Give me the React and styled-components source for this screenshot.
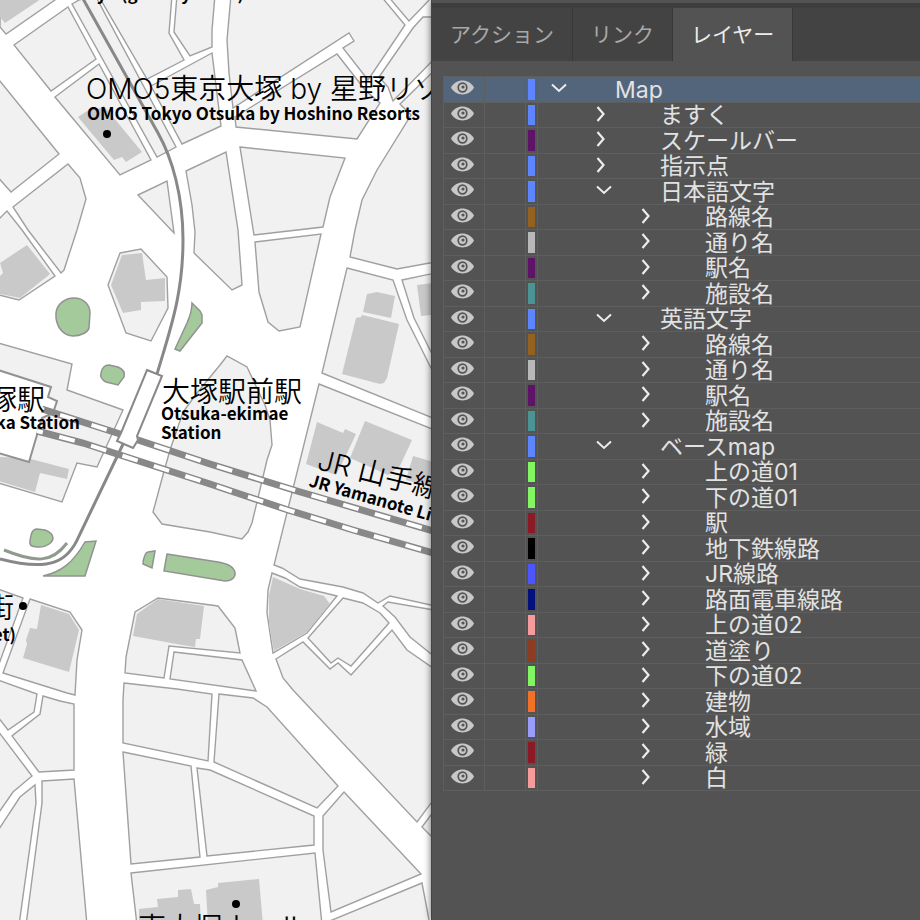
import React, { useState } from 'react';
import styled, { createGlobalStyle } from 'styled-components';

const App = () => {
    return (
        <AppStyled>
            <GlobalStyle />
            <MapPane>
                <StreetMap />
            </MapPane>
            <LayersPanel />
        </AppStyled>
    );
}

export default App;

const GlobalStyle = createGlobalStyle`
    * { box-sizing: border-box; }

    body {
        margin: 0;
        background-color: #535353;
        font-family: Inter, "Noto Sans CJK JP", sans-serif;
    }
`;

const AppStyled = styled.div`
    display: flex;
    height: 100vh;
    min-height: 800px;
    overflow: hidden;
`;

const MapPane = styled.main`
    flex: 1;
    min-width: 0;
    background-color: white;

    svg {
        display: block;
        width: 100%;
        height: 100%;
    }
`;

/* ---------- map ---------- */

const blocks = [
    '0,-5 0,27 6,34 55,0 60,-5',
    '14,45 68,7 96,59 51,91',
    '55,97 99,64 151,160 120,175',
    '72,4 79,0 95,-5 176,147 157,157',
    '98,-5 147,79 184,60 169,33 172,-5',
    '177,-5 174,32 190,56 212,47 212,30 215,-5',
    '151,86 212,53 221,126 182,144',
    '231,-5 227,40 229,73 233,108 349,33 354,41 343,48 368,80 405,25 380,-5',
    '236,127 235,117 337,54 366,91 380,103 357,139',
    '387,-5 409,21 434,-5',
    '440,17 423,17 413,28 379,77 388,87 393,101 440,53',
    '440,65 400,104 411,115 377,170 362,200 355,230 350,257 397,269 440,261',
    '-5,75 59,154 11,192 -5,174',
    '13,207 68,164 80,178 86,199 77,230 64,270 61,273 28,230',
    '-5,223 7,211 22,230 55,276 19,300 -5,294',
    '138,195 167,181 174,233',
    '120,253 141,249 167,277 168,308 151,341 126,333 108,285',
    '186,171 226,152 238,230 242,285 232,290 194,253 195,232 192,205',
    '240,147 345,158 330,197 323,227 254,235',
    '255,242 321,234 300,327 279,331 268,322 259,292',
    '347,268 393,280 407,320 440,386 440,421 322,373',
    '402,280 440,272 440,370 414,318',
    '319,384 440,432 440,607 390,596 378,603 363,593 343,587 300,579 282,568 274,565',
    '-5,342 72,364 67,390 123,410 97,467 77,463 62,502 -5,482',
    '162,524 153,512 163,475 170,450 183,412 197,393 220,365 227,356 247,367 265,405 270,420 272,445 267,460 252,523 248,532 242,539 210,532',
    '272,573 285,578 300,587 337,596 307,633 273,653 267,613 268,590',
    '343,598 363,603 380,613 389,623 351,666 338,658 331,663 308,638',
    '276,659 303,642 330,669 338,663 351,675 392,630 407,650 440,673 440,791 417,822 293,690 283,678',
    '383,606 388,602 440,611 440,661 410,637 395,617',
    '422,827 440,803 440,845',
    '344,792 421,874 331,912 323,850 323,816',
    '422,883 320,925 430,925',
    '219,694 253,698 267,707 338,786 317,808 214,762',
    '124,683 177,689 212,694 208,761 123,743 123,700',
    '125,673 126,657 135,612 158,598 218,606 235,628 240,653 169,646 164,678',
    '174,652 242,660 256,691 170,679',
    '123,752 191,766 200,857 131,864',
    '197,768 210,770 314,816 314,845 207,856',
    '131,873 315,853 322,925 137,925',
    '30,599 70,612 82,630 77,660 75,695 67,693 3,673',
    '-5,588 23,598 -5,675',
    '43,696 60,701 74,704 74,770 39,772 12,736 40,714',
    '-5,679 37,694 34,712 8,730 -5,713',
    '-5,727 32,776 13,792 -5,818',
    '-5,835 20,797 35,785 36,803 19,925 -5,925',
    '42,781 74,779 87,925 26,925 42,803',
];

const buildings = [
    '-5,-5 45,-5 38,1 5,23 -5,11',
    '78,117 93,107 98,109 104,106 142,152 126,162 122,157 114,160',
    '0,263 27,245 50,274 20,298 0,294 0,276 3,273',
    '122,255 142,253 146,280 165,278 165,301 141,302 141,310 123,313 111,285',
    '367,294 377,292 395,296 391,318 363,312',
    '356,318 361,317 362,315 371,317 399,324 387,378 384,383 380,384 342,374',
    '417,285 440,282 440,314 421,316',
    '317,422 343,433 345,429 356,434 350,447 336,475 306,464',
    '365,421 412,440 400,466 388,475 350,458',
    '413,456 440,464 440,490 406,480',
    '-5,462 0,457 27,458 69,469 67,479 40,473 35,492 -5,480',
    '41,605 69,614 79,630 69,672 23,658 27,644 26,640 30,628 37,629',
    '137,614 158,599 204,606 200,639 196,639 195,647 182,645 133,636',
    '273,577 300,589 324,596 330,604 307,632 274,651 269,625 269,595',
    '139,909 158,907 157,899 178,897 178,890 191,889 194,904 200,904 201,925 139,925',
    '206,890 218,887 218,883 259,879 263,925 208,925',
];

const StreetMap = () => (
    <svg viewBox="0 0 432 920" preserveAspectRatio="xMinYMin slice" role="img" aria-label="大塚駅">
        <g fill="#f1f1f1" stroke="#a0a0a0" strokeWidth="1.4">
            {blocks.map((points) => <polygon key={points} points={points} />)}
        </g>
        <g fill="#c9c9c9">
            {buildings.map((points) => <polygon key={points} points={points} />)}
        </g>

        {/* parks */}
        <g fill="#a4c99b" stroke="#929292" strokeWidth="1.5">
            <path d="M56 313c1-9 9-15 18-15 10 0 16 7 16 15l-1 15c-1 4-8 8-16 8-9 0-18-9-17-23z" />
            <path d="M101 373c1-5 4-8 8-8l9 2c5 2 7 6 6 10l-6 8-12-3c-4-2-6-5-5-9z" />
            <path d="M192 303l8 8 2 4v8l-22 28-5-2 12-26c3-7 5-11 5-20z" />
            <path d="M30 541c1-7 2-12 7-12l8 1c5 2 8 5 8 8 0 4-6 9-13 9-6 0-11 0-10-6z" />
            <path d="M43 576c18-4 30-13 42-34l11-1-11 35z" />
            <path d="M155 551l-3 17-9-4c0-6 3-12 5-12z" />
            <path d="M167 554l51 8c22 3 21 19 7 19l-61-10z" />
        </g>

        {/* station building */}
        <polygon points="-5,369 51,387 48,397 57,401 53,413 42,418 29,462 -5,452" fill="white" stroke="#929292" strokeWidth="2" />

        {/* JR tracks */}
        <g fill="none">
            <path d="M42 409L117 433 210 464 297 491 440 533" stroke="#888" strokeWidth="7" />
            <path d="M37 431L83 443 117 454 210 484 288 510 353 530 440 555" stroke="#888" strokeWidth="7" />
            <path d="M42 409L117 433 210 464 297 491 440 533" stroke="white" strokeWidth="4" strokeDasharray="16 17" strokeDashoffset="14" />
            <path d="M37 431L83 443 117 454 210 484 288 510 353 530 440 555" stroke="white" strokeWidth="4" strokeDasharray="16 17" strokeDashoffset="10" />
        </g>

        {/* tram line */}
        <g fill="none" stroke="#888">
            <path d="M82 -3L158 133C172 158 183 195 183 240 183 295 170 330 157 374" strokeWidth="3" />
            <path d="M126 438L79 536C68 562 50 572 0 559" strokeWidth="3" />
            <path d="M4 550C36 563 52 563 67 543" strokeWidth="3" stroke="#8f9c8d" />
            <polygon points="147,370 162,376 137,436 138,440 133,448 117,441 121,433" fill="white" strokeWidth="2" />
        </g>

        <circle cx="107" cy="134" r="4" />
        <circle cx="23" cy="606" r="4" />
        <circle cx="236" cy="904" r="4" />

        <NameJa x="86" y="99">OMO5東京大塚 by 星野リゾート</NameJa>
        <NameEn x="87" y="120">OMO5 Tokyo Otsuka by Hoshino Resorts</NameEn>
        <NameEn x="244" y="0" textAnchor="end">Tokyo (grocery store)</NameEn>
        <NameJa x="162" y="402">大塚駅前駅</NameJa>
        <NameEn x="161" y="420">Otsuka-ekimae</NameEn>
        <NameEn x="161" y="439">Station</NameEn>
        <NameJa x="45" y="410" textAnchor="end">大塚駅</NameJa>
        <NameEn x="80" y="429" textAnchor="end">Otsuka Station</NameEn>
        <g transform="translate(316 469) rotate(14)">
            <NameJa x="0" y="0">JR 山手線</NameJa>
        </g>
        <g transform="translate(308 486) rotate(16)">
            <NameEn x="0" y="0">JR Yamanote Line</NameEn>
        </g>
        <NameJa x="14" y="618" textAnchor="end">商店街</NameJa>
        <NameEn x="16" y="641" textAnchor="end">(Street)</NameEn>
        <NameJa x="138" y="938">東大塚ホール</NameJa>
    </svg>
);

const NameJa = styled.text`
    fill: black;
    font-family: Inter, "Noto Sans CJK JP", sans-serif;
    font-size: 28px;
    font-weight: 350;
`;

const NameEn = styled.text`
    fill: black;
    font-family: "Noto Sans CJK JP", sans-serif;
    font-size: 17px;
    font-weight: 700;
`;

/* ---------- layers panel ---------- */

const tabs = ['アクション', 'リンク', 'レイヤー'];

const layers = [
    { name: 'Map', color: '#5c85ff', depth: 0, open: true },
    { name: 'ますく', color: '#5c85ff', depth: 1 },
    { name: 'スケールバー', color: '#5e1466', depth: 1 },
    { name: '指示点', color: '#5c85ff', depth: 1 },
    { name: '日本語文字', color: '#5c85ff', depth: 1, open: true },
    { name: '路線名', color: '#946220', depth: 2 },
    { name: '通り名', color: '#b8b8b8', depth: 2 },
    { name: '駅名', color: '#5e1466', depth: 2 },
    { name: '施設名', color: '#4b9496', depth: 2 },
    { name: '英語文字', color: '#5c85ff', depth: 1, open: true },
    { name: '路線名', color: '#946220', depth: 2 },
    { name: '通り名', color: '#b8b8b8', depth: 2 },
    { name: '駅名', color: '#5e1466', depth: 2 },
    { name: '施設名', color: '#4b9496', depth: 2 },
    { name: 'ベースmap', color: '#5c85ff', depth: 1, open: true },
    { name: '上の道01', color: '#84f562', depth: 2 },
    { name: '下の道01', color: '#84f562', depth: 2 },
    { name: '駅', color: '#8c1a26', depth: 2 },
    { name: '地下鉄線路', color: '#000000', depth: 2 },
    { name: 'JR線路', color: '#4d55ff', depth: 2 },
    { name: '路面電車線路', color: '#04107c', depth: 2 },
    { name: '上の道02', color: '#f59b9b', depth: 2 },
    { name: '道塗り', color: '#8c3c20', depth: 2 },
    { name: '下の道02', color: '#84f562', depth: 2 },
    { name: '建物', color: '#f07228', depth: 2 },
    { name: '水域', color: '#9a9cfa', depth: 2 },
    { name: '緑', color: '#8c1a26', depth: 2 },
    { name: '白', color: '#f59b9b', depth: 2 },
];

const LayersPanel = () => {

    const [ current, currentUpdate ] = useState('レイヤー');

    return (
        <LayersPanelStyled>
            <TabBar role="tablist">
                {tabs.map((tab) => (
                    <Tab
                    key={tab}
                    type="button"
                    role="tab"
                    aria-selected={tab === current}
                    $active={tab === current}
                    onClick={() => currentUpdate(tab)}>{ tab }</Tab>
                ))}
            </TabBar>
            <LayerList>
                {layers.map((layer, index) => <LayerRow key={index} layer={layer} selected={index === 0} />)}
            </LayerList>
        </LayersPanelStyled>
    );
}

const LayersPanelStyled = styled.aside`
    position: relative;
    flex: none;
    width: 489px;
    padding-top: 3px;
    background-color: #535353;
    border-left: solid 1px #444;
    box-shadow: 0 0 7px rgba(0,0,0, .6);
`;

const TabBar = styled.div`
    display: flex;
    height: 58px;
    margin-bottom: 15px;

    background-color: #434343;
    border-top: solid 5px #3e3e3e;
`;

const Tab = styled.button`
    padding: 0 18px 4px;
    border: none;
    border-right: solid 1px #383838;

    background-color: ${({$active}) => $active ? '#535353' : '#434343'};
    color: ${({$active}) => $active ? '#ececec' : '#a8a8a8'};
    font-family: inherit;
    font-size: 21px;
`;

const LayerList = styled.ul`
    margin: 0 0 0 11px;
    padding: 0;
    border-top: solid 1px #5e5e5e;
    border-left: solid 1px #5e5e5e;
    list-style: none;
`;

const LayerRow = ({layer, selected}) => {

    const [ visible, visibleUpdate ] = useState(true);

    return (
        <LayerRowStyled $selected={selected}>
            <EyeButton
            type="button"
            aria-label="表示の切り替え"
            aria-pressed={visible}
            onClick={() => visibleUpdate(!visible)}>
                {visible && <EyeIcon />}
            </EyeButton>
            <LockCell />
            <ColorCell><ColorChip $color={layer.color} /></ColorCell>
            <NameCell $depth={layer.depth}>
                <Twisty type="button" aria-label={layer.name} aria-expanded={!!layer.open}>
                    {layer.open ? <ChevronDown /> : <ChevronRight />}
                </Twisty>
                <span>{ layer.name }</span>
            </NameCell>
        </LayerRowStyled>
    );
}

const LayerRowStyled = styled.li`
    display: grid;
    grid-template-columns: 41px 41px 12px 1fr;
    height: 25px;

    background-color: ${({$selected}) => $selected ? '#53657b' : 'transparent'};
    border-bottom: solid 1px #5e5e5e;

    &:nth-child(odd) { height: 26px; }
`;

const EyeButton = styled.button`
    display: flex;
    align-items: center;
    justify-content: center;
    padding: 0 3px 4px 0;
    border: none;
    border-right: solid 1px #5e5e5e;
    background: none;
`;

const LockCell = styled.div`
    border-right: solid 1px #5e5e5e;
`;

const ColorCell = styled.div`
    padding: 2px;
    border-right: solid 1px #5e5e5e;
`;

const ColorChip = styled.div`
    width: 7px;
    height: 100%;
    background-color: ${({$color}) => $color};
`;

const NameCell = styled.div`
    display: flex;
    align-items: center;
    padding-left: ${({$depth}) => 13 + $depth * 45}px;

    color: #e2e2e2;
    font-size: 23px;
    line-height: 24px;
    white-space: nowrap;
`;

const Twisty = styled.button`
    display: flex;
    align-items: center;
    width: 64px;
    height: 20px;
    padding: 0 0 3px;
    border: none;
    background: none;
`;

const EyeIcon = () => (
    <svg width="23" height="15" viewBox="0 0 23 15">
        <path d="M0 7.5C5-1.8 18-1.8 23 7.5 18 16.8 5 16.8 0 7.5z" fill="#c8c8c8" />
        <circle cx="11.5" cy="7.5" r="4.3" fill="none" stroke="#555" strokeWidth="1.7" />
        <circle cx="12" cy="7" r="1.6" fill="#555" />
    </svg>
);

const ChevronDown = () => (
    <svg width="16" height="10" viewBox="0 0 16 10" fill="none" stroke="#ececec" strokeWidth="2">
        <path d="M1 1.5L8 8 15 1.5" />
    </svg>
);

const ChevronRight = () => (
    <svg width="10" height="16" viewBox="0 0 10 16" fill="none" stroke="#ececec" strokeWidth="2.2">
        <path d="M1.5 1L7.5 8 1.5 15" />
    </svg>
);
